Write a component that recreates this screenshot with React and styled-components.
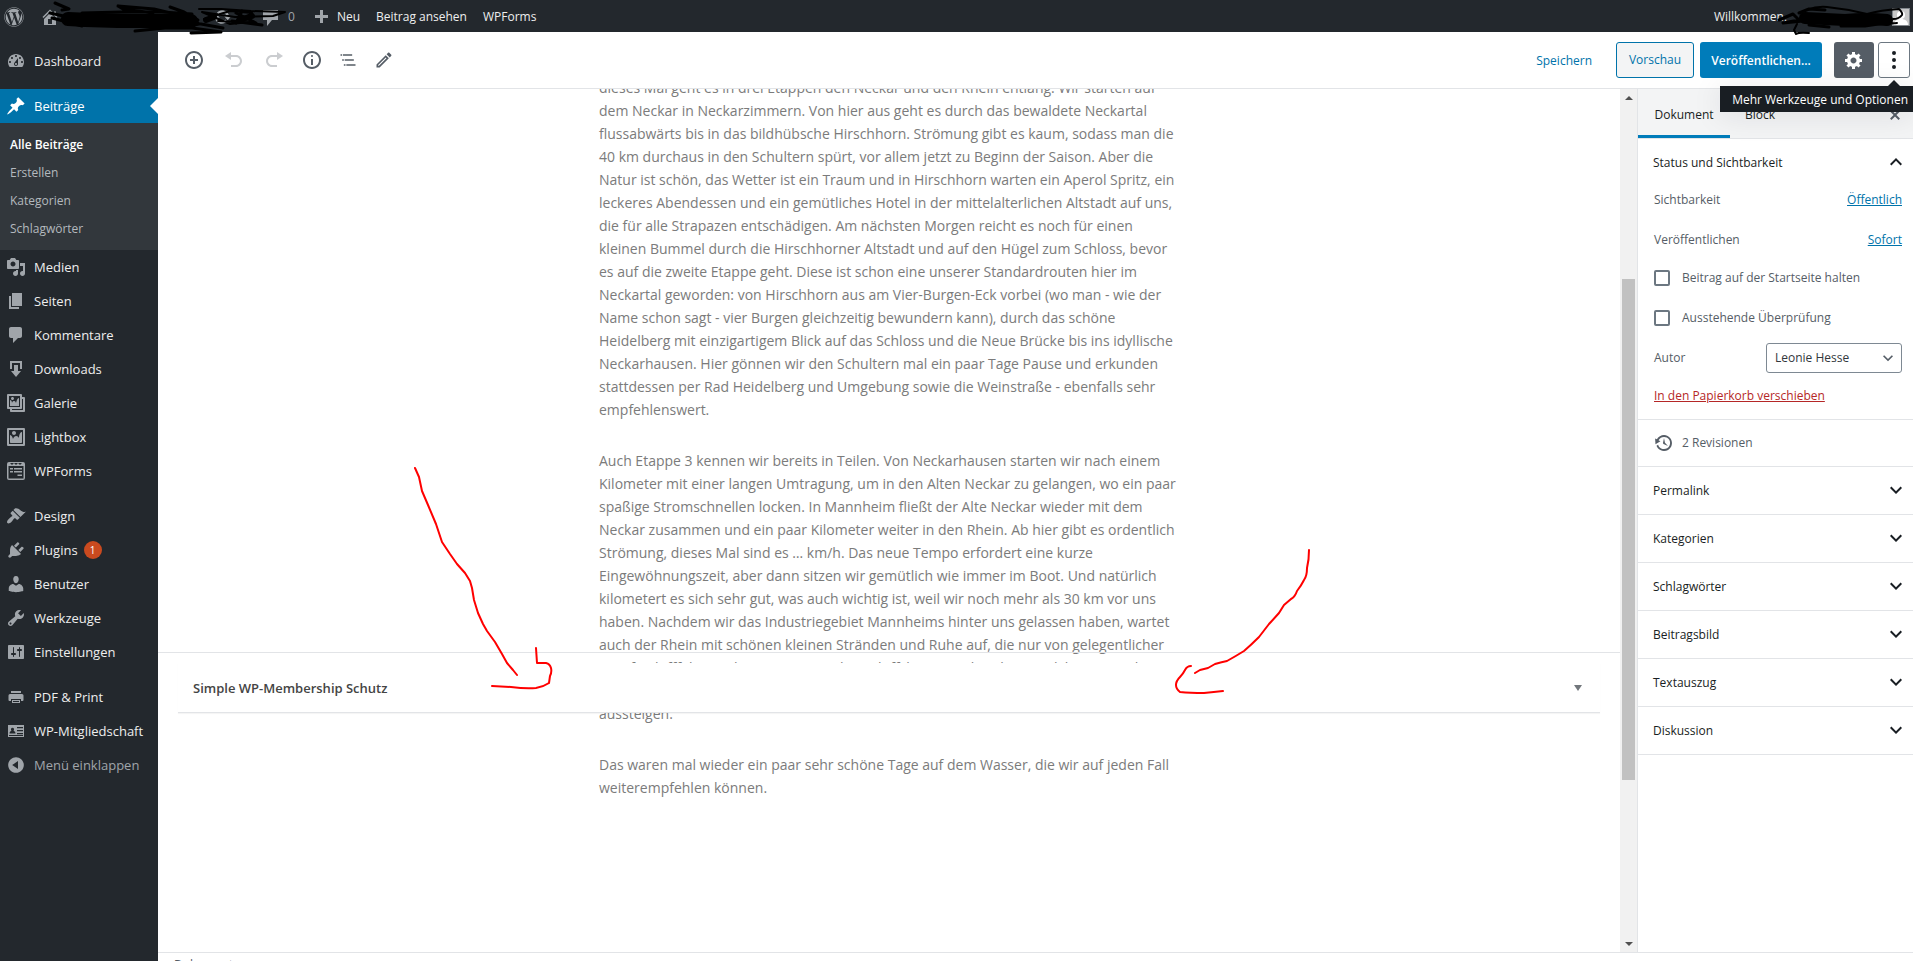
import React from "react";
import styled, { createGlobalStyle, css } from "styled-components";
import { FaWordpress } from "react-icons/fa";

const colors = {
  ADMIN_DARK: "#23282d",
  ADMIN_SUBMENU: "#32373c",
  ADMIN_ICON: "#a0a5aa",
  ADMIN_TEXT: "#eeeeee",
  BLUE: "#0073aa",
  BUTTON_BLUE: "#007cba",
  BORDER: "#e2e4e7",
  DARK: "#191e23",
  GREY: "#555d66",
  LIGHT: "#f3f4f5",
  RED: "#b52727",
};

const GlobalStyle = createGlobalStyle`
  * {
    box-sizing: border-box;
  }

  body {
    margin: 0;
    background: #fff;
    font-family: "Open Sans", "Noto Sans", sans-serif;
    font-size: 12px;
    line-height: 20px;
    color: ${colors.GREY};
  }

  button, select, input {
    font: inherit;
    margin: 0;
  }

  button {
    background: none;
    border: 0;
    padding: 0;
    color: inherit;
    cursor: pointer;
  }

  a {
    color: inherit;
    text-decoration: none;
  }

  ul {
    list-style: none;
    margin: 0;
    padding: 0;
  }
`;

const Page = styled.div`
  position: relative;
  display: flex;
  flex-direction: column;
  height: 100vh;
  overflow: hidden;
`;

const AdminBar = styled.header`
  display: flex;
  align-items: center;
  justify-content: space-between;
  flex: none;
  height: 32px;
  padding: 1px 4px 0;
  background: ${colors.ADMIN_DARK};
  color: ${colors.ADMIN_TEXT};
`;

const AdminBarGroup = styled.nav`
  display: flex;
  align-items: center;

  a {
    display: flex;
    align-items: center;
    gap: 6px;
    margin-right: 16px;
  }

  svg {
    fill: ${colors.ADMIN_ICON};
    color: ${colors.ADMIN_ICON};
  }

  .home {
    margin: 0 152px 0 0;
  }

  .updates {
    margin-right: 28px;
  }

  .comments {
    gap: 8px;
    color: ${colors.ADMIN_ICON};
  }
`;

const Account = styled.a`
  display: flex;
  align-items: center;
  gap: 105px;
`;

const Avatar = styled.svg`
  width: 18px;
  height: 18px;
  border: 1px solid #82878c;
  background: #c8c8c8;
  margin-right: -1px;
`;

const Body = styled.div`
  display: flex;
  flex: 1;
  min-height: 0;
`;

const SideMenu = styled.nav`
  flex: none;
  width: 158px;
  padding-top: 12px;
  background: ${colors.ADMIN_DARK};
  color: ${colors.ADMIN_TEXT};
  font-size: 13px;
`;

const MenuGroup = styled.ul`
  margin-bottom: 11px;
`;

const MenuLink = styled.a`
  position: relative;
  display: flex;
  align-items: center;
  gap: 8px;
  height: 34px;
  padding-left: 6px;
  white-space: nowrap;

  svg {
    flex: none;
    fill: ${colors.ADMIN_ICON};
  }

  ${({ $active }) =>
    $active &&
    css`
      background: ${colors.BLUE};
      color: #fff;

      svg {
        fill: #fff;
      }

      &::after {
        content: "";
        position: absolute;
        right: 0;
        border: 8px solid transparent;
        border-right-color: #fff;
      }
    `}
`;

const CollapseButton = styled.button`
  display: flex;
  align-items: center;
  gap: 8px;
  height: 34px;
  padding-left: 6px;
  color: ${colors.ADMIN_ICON};

  svg {
    fill: ${colors.ADMIN_ICON};
  }
`;

const SubMenu = styled.ul`
  padding: 8px 0 7px;
  background: ${colors.ADMIN_SUBMENU};
`;

const SubMenuLink = styled.a`
  display: block;
  padding: 4px 10px;
  font-size: 12px;
  font-weight: ${({ $current }) => ($current ? 600 : 400)};
  color: ${({ $current }) => ($current ? "#fff" : "#b4b9be")};
`;

const Badge = styled.span`
  width: 18px;
  height: 18px;
  border-radius: 9px;
  margin-left: -2px;
  background: #ca4a1f;
  color: #fff;
  font-size: 10px;
  line-height: 18px;
  text-align: center;
`;

const Editor = styled.div`
  display: flex;
  flex-direction: column;
  flex: 1;
  min-width: 0;
`;

const Toolbar = styled.div`
  display: flex;
  align-items: center;
  justify-content: space-between;
  flex: none;
  height: 57px;
  padding: 0 3px 0 22px;
  border-bottom: 1px solid ${colors.BORDER};
`;

const ToolGroup = styled.div`
  display: flex;
  align-items: center;
  gap: 12px;
`;

const ToolButton = styled.button`
  display: flex;
  align-items: center;
  justify-content: center;
  width: ${({ $wide }) => ($wide ? 28 : 24)}px;
  height: 36px;

  svg {
    fill: ${colors.GREY};
  }

  &:disabled {
    opacity: 0.3;
  }
`;

const ActionGroup = styled.div`
  display: flex;
  align-items: center;
`;

const ActionButton = styled.button`
  position: relative;
  display: flex;
  align-items: center;
  justify-content: center;
  height: 36px;
  border-radius: 3px;
  color: ${colors.BLUE};

  ${({ $kind }) =>
    $kind === "save" &&
    css`
      padding: 2px 24px 0;
    `}

  ${({ $kind }) =>
    $kind === "preview" &&
    css`
      width: 78px;
      border: 1px solid ${colors.BLUE};
      background: ${colors.LIGHT};
    `}

  ${({ $kind }) =>
    $kind === "publish" &&
    css`
      width: 122px;
      padding-top: 2px;
      margin: 0 12px 0 6px;
      background: ${colors.BUTTON_BLUE};
      color: #fff;
      font-weight: 600;
    `}

  ${({ $kind }) =>
    $kind === "settings" &&
    css`
      width: 40px;
      margin-right: 4px;
      background: ${colors.GREY};
      fill: #fff;
    `}

  ${({ $kind }) =>
    $kind === "more" &&
    css`
      width: 32px;
      border: 1px solid #6c7781;
      fill: ${colors.DARK};
    `}
`;

const Tooltip = styled.span`
  position: absolute;
  z-index: 5;
  top: 43px;
  right: -4px;
  padding: 4px 5px 2px 12px;
  background: ${colors.DARK};
  color: #fff;
  font-weight: 500;
  white-space: nowrap;
  box-shadow: 0 3px 30px rgba(25, 30, 35, 0.1);

  &::before {
    content: "";
    position: absolute;
    top: -6px;
    right: 13px;
    border: 6px solid transparent;
    border-top: 0;
    border-bottom-color: ${colors.DARK};
  }
`;

const Workspace = styled.div`
  display: flex;
  flex: 1;
  min-height: 0;
  border-bottom: 1px solid ${colors.BORDER};
`;

const Content = styled.main`
  display: flex;
  flex-direction: column;
  flex: 1;
  min-width: 0;
  overflow: hidden;
`;

const PostArea = styled.article`
  flex: 1;
  min-height: 0;
  width: 580px;
  margin: 0 auto;
  color: #7b7b7b;
  font-size: 14px;
  line-height: 23px;

  p {
    margin: -13px 0 41px;
  }
`;

const MetaArea = styled.section`
  flex: none;
  height: 300px;
  padding: 10px 20px;
  border-top: 1px solid ${colors.BORDER};
`;

const MetaBox = styled.button`
  position: relative;
  display: flex;
  align-items: center;
  justify-content: space-between;
  width: 100%;
  height: 50px;
  padding: 0 18px 0 15px;
  background: #fff;
  border-bottom: 1px solid ${colors.BORDER};
  box-shadow: 0 1px 1px rgba(0, 0, 0, 0.04);
  color: #444;
  font-size: 13px;
  font-weight: 600;
`;

const ScrollBar = styled.div`
  display: flex;
  flex-direction: column;
  flex: none;
  width: 17px;
  padding: 0 2px;
  background: #f1f1f1;
`;

const ScrollArrow = styled.button`
  height: 17px;
  fill: #505050;
  display: flex;
  align-items: center;
  justify-content: center;
`;

const ScrollRail = styled.div`
  display: grid;
  flex: 1;
  grid-template-rows: 173fr 501fr 155fr;
`;

const ScrollThumb = styled.div`
  grid-row: 2;
  background: #c1c1c1;
`;

const Settings = styled.aside`
  flex: none;
  width: 276px;
  border-left: 1px solid ${colors.BORDER};
`;

const Tabs = styled.div`
  display: flex;
  align-items: stretch;
  height: 50px;
  background: ${colors.LIGHT};
  border-bottom: 1px solid ${colors.BORDER};
`;

const Tab = styled.button`
  padding: 6px 15px 0;
  color: ${colors.DARK};
  border-bottom: 3px solid
    ${({ $active }) => ($active ? colors.BUTTON_BLUE : "transparent")};
  width: ${({ $active }) => ($active ? "92px" : "auto")};
`;

const CloseButton = styled.button`
  margin-left: auto;
  width: 36px;
  padding: 8px 0 0;
  fill: ${colors.GREY};
`;

const Panel = styled.section`
  border-bottom: 1px solid ${colors.BORDER};
`;

const PanelTitle = styled.button`
  display: flex;
  align-items: center;
  justify-content: space-between;
  width: 100%;
  height: 47px;
  padding: 0 5px 0 15px;
  color: ${colors.DARK};
  font-weight: 500;

  svg {
    fill: ${colors.DARK};
    margin-bottom: 2px;
  }
`;

const PanelBody = styled.div`
  padding: 4px 11px 13px 16px;
`;

const PanelRow = styled.div`
  display: flex;
  align-items: center;
  justify-content: space-between;
  height: 20px;
  margin-bottom: ${({ $gap }) => $gap || 20}px;
`;

const TextLink = styled.a`
  color: ${({ $danger }) => ($danger ? colors.RED : colors.BLUE)};
  text-decoration: underline;
`;

const CheckLabel = styled.label`
  display: flex;
  align-items: center;
  gap: 12px;
`;

const CheckBox = styled.input`
  appearance: none;
  width: 16px;
  height: 16px;
  border: 2px solid #6c7781;
  border-radius: 2px;
  background: #fff;
`;

const SelectWrap = styled.span`
  display: grid;
  align-items: center;
  justify-items: end;

  > * {
    grid-area: 1 / 1;
  }

  svg {
    margin-right: 4px;
    pointer-events: none;
    fill: ${colors.GREY};
  }
`;

const Select = styled.select`
  appearance: none;
  width: 136px;
  height: 30px;
  padding: 0 24px 0 8px;
  border: 1px solid #7e8993;
  border-radius: 3px;
  background: #fff;
  color: #32373c;
`;

const Revisions = styled.a`
  display: flex;
  align-items: center;
  gap: 8px;
  height: 46px;
  padding-left: 16px;
  font-weight: 500;

  svg {
    fill: ${colors.GREY};
  }
`;

const Breadcrumb = styled.footer`
  flex: none;
  height: 8px;
  padding: 2px 16px 0;
  overflow: hidden;
`;

const Drawing = styled.svg`
  position: absolute;
  z-index: 10;
  top: 0;
  ${({ $side }) => ($side === "right" ? "right: 0;" : "left: 0;")}
  pointer-events: none;
  fill: none;
  stroke: ${({ $ink }) => $ink};
  stroke-linecap: round;
  stroke-linejoin: round;
`;

const icons = {
  home: "M16 8.5l1.53 1.53-1.06 1.06L10 4.6l-6.47 6.49-1.06-1.06L10 2.5l4 4v-2h2v4zm-6-2.46l6 5.99V18H4v-5.97zM12 17v-5H8v5h4z",
  update:
    "M10.2 3.28c3.53 0 6.43 2.61 6.92 6h2.08l-3.5 4-3.5-4h2.32c-.45-1.97-2.21-3.45-4.32-3.45-1.45 0-2.73.71-3.54 1.78L4.95 5.66C6.23 4.2 8.11 3.28 10.2 3.28zm-.4 13.44c-3.52 0-6.43-2.61-6.92-6H.8l3.5-4c1.17 1.33 2.33 2.67 3.5 4H5.48c.45 1.97 2.21 3.45 4.32 3.45 1.45 0 2.73-.71 3.54-1.78l1.71 1.95c-1.28 1.46-3.15 2.38-5.25 2.38z",
  barComment: "M3 3h15v10h-6l-5 6v-6H3z",
  plus: "M17 8v3h-5v5H9v-5H4V8h5V3h3v5h5z",
  dashboard:
    "M3.76 16h12.48c1.1-1.37 1.76-3.11 1.76-5 0-4.42-3.58-8-8-8s-8 3.58-8 8c0 1.89.66 3.63 1.76 5zM10 4c.55 0 1 .45 1 1s-.45 1-1 1-1-.45-1-1 .45-1 1-1zM6 6c.55 0 1 .45 1 1s-.45 1-1 1-1-.45-1-1 .45-1 1-1zm8 0c.55 0 1 .45 1 1s-.45 1-1 1-1-.45-1-1 .45-1 1-1zm-5.37 5.55L12 7v6c0 1.1-.9 2-2 2s-2-.9-2-2c0-.57.24-1.08.63-1.45zM4 10c.55 0 1 .45 1 1s-.45 1-1 1-1-.45-1-1 .45-1 1-1zm12 0c.55 0 1 .45 1 1s-.45 1-1 1-1-.45-1-1 .45-1 1-1zm-5 3c0-.55-.45-1-1-1s-1 .45-1 1 .45 1 1 1 1-.45 1-1z",
  pin: "M10.44 3.02l1.82-1.82 6.36 6.35-1.83 1.82c-1.05-.68-2.48-.57-3.41.36l-.75.75c-.92.93-1.04 2.35-.35 3.41l-1.83 1.82-2.41-2.41-2.8 2.79c-.42.42-3.38 2.71-3.8 2.29s1.86-3.39 2.28-3.81l2.79-2.79L4.1 9.36l1.83-1.82c1.05.69 2.48.57 3.4-.36l.75-.75c.93-.92 1.05-2.35.36-3.41z",
  media:
    "M13 11V4c0-.55-.45-1-1-1h-1.67L9 1H5L3.67 3H2c-.55 0-1 .45-1 1v7c0 .55.45 1 1 1h10c.55 0 1-.45 1-1zM7 4.5c1.38 0 2.5 1.12 2.5 2.5S8.38 9.5 7 9.5 4.5 8.38 4.5 7 5.62 4.5 7 4.5zM14 6h5v10.5c0 1.38-1.12 2.5-2.5 2.5S14 17.88 14 16.5s1.12-2.5 2.5-2.5c.17 0 .34.02.5.05V9h-3V6zm-4 8.05V13h2v3.5c0 1.38-1.12 2.5-2.5 2.5S7 17.88 7 16.5 8.12 14 9.5 14c.17 0 .34.02.5.05z",
  page: "M6 15V2h10v13H6zm-1 1h8v2H3V5h2v11z",
  comment:
    "M5 2h9c1.1 0 2 .9 2 2v7c0 1.1-.9 2-2 2h-2l-5 5v-5H5c-1.1 0-2-.9-2-2V4c0-1.1.9-2 2-2z",
  download: "M14.01 4v6h2V2H4v8h2.01V4h8zm-2 2v6h3l-5 6-5-6h3V6h4z",
  gallery:
    "M16 4h1.96c.57 0 1.04.47 1.04 1.04v12.92c0 .57-.47 1.04-1.04 1.04H5.04C4.47 19 4 18.53 4 17.96V16H2.04C1.47 16 1 15.53 1 14.96V2.04C1 1.47 1.47 1 2.04 1h12.92c.57 0 1.04.47 1.04 1.04V4zM3 14h11V3H3v11zm5-8.5C8 4.67 7.33 4 6.5 4S5 4.67 5 5.5 5.67 7 6.5 7 8 6.33 8 5.5zm2 4.5s1-5 3-5v8H4V7c2 0 2 3 2 3s.33-2 2-2 2 2 2 2zm7 7V6h-1v8.96c0 .57-.47 1.04-1.04 1.04H6v1h11z",
  image:
    "M2.25 1h15.5c.69 0 1.25.56 1.25 1.25v15.5c0 .69-.56 1.25-1.25 1.25H2.25C1.56 19 1 18.44 1 17.75V2.25C1 1.56 1.56 1 2.25 1zM17 17V3H3v14h14zM10 6c0-1.1-.9-2-2-2s-2 .9-2 2 .9 2 2 2 2-.9 2-2zm3 5s0-6 3-6v10c0 .55-.45 1-1 1H5c-.55 0-1-.45-1-1V8c2 0 3 4 3 4s1-3 3-3 3 2 3 2z",
  forms:
    "M3 1h14a2 2 0 012 2v14a2 2 0 01-2 2H3a2 2 0 01-2-2V3a2 2 0 012-2zm-.5 4v12.500h15V5zM4 2l2 2 2-2zm4 0l2 2 2-2zm4 0l2 2 2-2zM4 7h3v1.500H4zm4 0h8v1.500H8zM4 10h3v1.500H4zm4 0h8v1.500H8zM11.500 13.500H16V15h-4.500z",
  appearance:
    "M14.48 11.06L7.41 3.99l1.5-1.5c.5-.56 2.3-.47 3.51.32 1.21.8 1.43 1.28 2.91 2.1 1.18.64 2.45 1.26 4.45.85zm-.71.71L6.7 4.7 4.93 6.47c-.39.39-.39 1.02 0 1.41l1.06 1.06c.39.39.39 1.03 0 1.42-.6.6-1.43 1.11-2.21 1.69-.35.26-.7.53-1.01.84C1.43 14.23.4 16.08 1.4 17.07c.99 1 2.84-.03 4.18-1.36.31-.31.58-.66.85-1.02.57-.78 1.08-1.61 1.69-2.21.39-.39 1.02-.39 1.41 0l1.06 1.06c.39.39 1.02.39 1.41 0z",
  plugins:
    "M13.11 4.36L9.87 7.6 8 5.73l3.24-3.24c.35-.34 1.05-.2 1.56.32.52.51.66 1.21.31 1.55zm-8 1.77l.91-1.12 9.01 9.01-1.19.84c-.71.71-2.63 1.16-3.82 1.16H6.14L4.9 17.26c-.59.59-1.54.59-2.12 0-.59-.58-.59-1.53 0-2.12l1.24-1.24v-3.88c0-1.13.4-3.19 1.09-3.89zm7.26 3.97l3.24-3.24c.34-.35 1.04-.21 1.55.31.52.51.66 1.21.31 1.55l-3.24 3.25z",
  users:
    "M10 9.25c-2.27 0-2.73-3.44-2.73-3.44C7 4.02 7.82 2 9.97 2c2.16 0 2.98 2.02 2.71 3.81 0 0-.41 3.44-2.68 3.44zm0 2.57L12.72 10c2.39 0 4.52 2.33 4.52 4.53v2.49s-3.65 1.13-7.24 1.13c-3.65 0-7.24-1.13-7.24-1.13v-2.49c0-2.25 1.94-4.48 4.47-4.48z",
  tools:
    "M16.68 9.77c-1.34 1.34-3.3 1.67-4.95.99l-5.41 6.52c-.99.99-2.59.99-3.58 0s-.99-2.59 0-3.57l6.52-5.42c-.68-1.65-.35-3.61.99-4.95 1.28-1.28 3.12-1.62 4.72-1.06l-2.89 2.89 2.82 2.82 2.86-2.87c.53 1.58.18 3.39-1.08 4.65zM3.81 16.21c.4.39 1.04.39 1.43 0 .4-.4.4-1.04 0-1.43-.39-.4-1.03-.4-1.43 0-.39.39-.39 1.03 0 1.43z",
  settings:
    "M18 16V4c0-.55-.45-1-1-1H3c-.55 0-1 .45-1 1v12c0 .55.45 1 1 1h14c.55 0 1-.45 1-1zM8 11h1c.55 0 1 .45 1 1s-.45 1-1 1H8v1.5c0 .28-.22.5-.5.5s-.5-.22-.5-.5V13H6c-.55 0-1-.45-1-1s.45-1 1-1h1V5.5c0-.28.22-.5.5-.5s.5.22.5.5V11zm5-2h-1c-.55 0-1-.45-1-1s.45-1 1-1h1V5.5c0-.28.22-.5.5-.5s.5.22.5.5V7h1c.55 0 1 .45 1 1s-.45 1-1 1h-1v5.5c0 .28-.22.5-.5.5s-.5-.22-.5-.5V9z",
  print:
    "M5 4h10v2H5zM4 7h12a1.500 1.500 0 011.500 1.500V13a1 1 0 01-1 1H15v-2H5v2H3.500a1 1 0 01-1-1V8.500A1.500 1.500 0 014 7zm2 6h8v3H6zm1 1v1h6v-1z",
  idAlt:
    "M2 4h16v12H2zm1.500 8.500h6c0-2-1.500-2.500-2-2.700 1-.8.700-3-1-3s-2 2.200-1 3c-.5.200-2 .700-2 2.700zM11 6v1.200h6V6zm0 3v1.200h6V9zm0 3v1.200h6V12zM3 14v1h14v-1z",
  collapse:
    "M10 2.160c4.330 0 7.840 3.510 7.840 7.840s-3.510 7.840-7.840 7.840S2.160 14.330 2.160 10 5.710 2.160 10 2.160zm2 11.720V6.120L6.180 9.970z",
  insert:
    "M10 1c-5 0-9 4-9 9s4 9 9 9 9-4 9-9-4-9-9-9zm0 16c-3.900 0-7-3.100-7-7s3.100-7 7-7 7 3.100 7 7-3.100 7-7 7zm1-11H9v3H6v2h3v3h2v-3h3V9h-3V6z",
  undo: "M12 5H7V2L1 6l6 4V7h5c2.200 0 4 1.800 4 4s-1.800 4-4 4H7v2h5c3.300 0 6-2.700 6-6s-2.700-6-6-6z",
  redo: "M8 5h5V2l6 4-6 4V7H8c-2.200 0-4 1.800-4 4s1.800 4 4 4h5v2H8c-3.300 0-6-2.700-6-6s2.700-6 6-6z",
  info: "M9 15h2V9H9v6zm1-10c-.5 0-1 .5-1 1s.5 1 1 1 1-.5 1-1-.5-1-1-1zm0-4c-5 0-9 4-9 9s4 9 9 9 9-4 9-9-4-9-9-9zm0 16c-3.900 0-7-3.100-7-7s3.100-7 7-7 7 3.100 7 7-3.100 7-7 7z",
  outline:
    "M5 5H3v2h2V5zm3 8h11v-2H8v2zm9-8H6v2h11V5zM7 11H5v2h2v-2zm0 8h2v-2H7v2zm3-2v2h11v-2H10z",
  pencil:
    "M3 17.250V21h3.750L17.810 9.940l-3.750-3.750L3 17.250zM5.920 19H5v-.920l9.060-9.060.920.920L5.920 19zM20.710 5.630l-2.340-2.340c-.200-.200-.450-.290-.710-.290s-.510.100-.700.290l-1.830 1.830 3.750 3.750 1.830-1.830c.390-.390.390-1.020 0-1.410z",
  gear: "M18 12h-2.180c-.170.700-.440 1.350-.810 1.930l1.540 1.540-2.100 2.100-1.540-1.540c-.580.360-1.230.630-1.910.790V19H8v-2.180c-.680-.160-1.330-.430-1.910-.790l-1.540 1.540-2.120-2.120 1.540-1.540c-.360-.580-.630-1.230-.790-1.910H1V9.030h2.170c.160-.700.440-1.350.800-1.940L2.430 5.550l2.100-2.100 1.540 1.540c.580-.370 1.240-.640 1.930-.810V2h3v2.180c.680.160 1.330.430 1.910.790l1.540-1.540 2.120 2.120-1.540 1.540c.360.590.640 1.240.800 1.940H18V12zm-8.500 1.500c1.660 0 3-1.340 3-3s-1.340-3-3-3-3 1.340-3 3 1.340 3 3 3z",
  more: "M10 1a2 2 0 110 4 2 2 0 010-4zm0 7a2 2 0 110 4 2 2 0 010-4zm0 7a2 2 0 110 4 2 2 0 010-4z",
  close:
    "M14.950 6.460L11.410 10l3.540 3.540-1.410 1.410L10 11.420l-3.530 3.530-1.420-1.420L8.580 10 5.050 6.470l1.420-1.420L10 8.580l3.540-3.530z",
  down: "M7.410 8.590L12 13.170l4.590-4.580L18 10l-6 6-6-6z",
  up: "M12 8l-6 6 1.410 1.410L12 10.830l4.590 4.580L18 14z",
  backup:
    "M13.650 2.880c3.930 2.010 5.480 6.840 3.470 10.770s-6.830 5.480-10.770 3.470c-1.870-.960-3.200-2.560-3.860-4.400l1.640-1.030c.450 1.570 1.520 2.950 3.080 3.760 3.010 1.540 6.690.350 8.230-2.660 1.550-3.010.360-6.690-2.650-8.240C9.780 3.010 6.100 4.200 4.560 7.210l1.880.970-4.950 3.080-.390-5.820 1.780.910C4.900 2.400 9.750.890 13.650 2.880zm-4.360 7.830C9.110 10.530 9 10.280 9 10c0-.070.030-.120.040-.190h-.010L10 5l.970 4.810L14 13l-4.500-2.120.020-.020c-.080-.040-.160-.090-.230-.150z",
};

const Icon = ({ name, size = 20, box = 20 }) => (
  <svg
    width={size}
    height={size}
    viewBox={`0 0 ${box} ${box}`}
    fillRule="evenodd"
    aria-hidden="true"
  >
    <path d={icons[name]} />
  </svg>
);

const menuGroups = [
  [{ label: "Dashboard", icon: "dashboard" }],
  [
    {
      label: "Beiträge",
      icon: "pin",
      active: true,
      children: ["Alle Beiträge", "Erstellen", "Kategorien", "Schlagwörter"],
    },
    { label: "Medien", icon: "media" },
    { label: "Seiten", icon: "page" },
    { label: "Kommentare", icon: "comment" },
    { label: "Downloads", icon: "download" },
    { label: "Galerie", icon: "gallery" },
    { label: "Lightbox", icon: "image" },
    { label: "WPForms", icon: "forms" },
  ],
  [
    { label: "Design", icon: "appearance" },
    { label: "Plugins", icon: "plugins", count: 1 },
    { label: "Benutzer", icon: "users" },
    { label: "Werkzeuge", icon: "tools" },
    { label: "Einstellungen", icon: "settings" },
  ],
  [
    { label: "PDF & Print", icon: "print" },
    { label: "WP-Mitgliedschaft", icon: "idAlt" },
  ],
];

const paragraphs = [
  "dieses Mal geht es in drei Etappen den Neckar und den Rhein entlang. Wir starten auf dem Neckar in Neckarzimmern. Von hier aus geht es durch das bewaldete Neckartal flussabwärts bis in das bildhübsche Hirschhorn. Strömung gibt es kaum, sodass man die 40 km durchaus in den Schultern spürt, vor allem jetzt zu Beginn der Saison. Aber die Natur ist schön, das Wetter ist ein Traum und in Hirschhorn warten ein Aperol Spritz, ein leckeres Abendessen und ein gemütliches Hotel in der mittelalterlichen Altstadt auf uns, die für alle Strapazen entschädigen. Am nächsten Morgen reicht es noch für einen kleinen Bummel durch die Hirschhorner Altstadt und auf den Hügel zum Schloss, bevor es auf die zweite Etappe geht. Diese ist schon eine unserer Standardrouten hier im Neckartal geworden: von Hirschhorn aus am Vier-Burgen-Eck vorbei (wo man - wie der Name schon sagt - vier Burgen gleichzeitig bewundern kann), durch das schöne Heidelberg mit einzigartigem Blick auf das Schloss und die Neue Brücke bis ins idyllische Neckarhausen. Hier gönnen wir den Schultern mal ein paar Tage Pause und erkunden stattdessen per Rad Heidelberg und Umgebung sowie die Weinstraße - ebenfalls sehr empfehlenswert.",
  "Auch Etappe 3 kennen wir bereits in Teilen. Von Neckarhausen starten wir nach einem Kilometer mit einer langen Umtragung, um in den Alten Neckar zu gelangen, wo ein paar spaßige Stromschnellen locken. In Mannheim fließt der Alte Neckar wieder mit dem Neckar zusammen und ein paar Kilometer weiter in den Rhein. Ab hier gibt es ordentlich Strömung, dieses Mal sind es … km/h. Das neue Tempo erfordert eine kurze Eingewöhnungszeit, aber dann sitzen wir gemütlich wie immer im Boot. Und natürlich kilometert es sich sehr gut, was auch wichtig ist, weil wir noch mehr als 30 km vor uns haben. Nachdem wir das Industriegebiet Mannheims hinter uns gelassen haben, wartet auch der Rhein mit schönen kleinen Stränden und Ruhe auf, die nur von gelegentlicher Berufsschifffahrt und ein paar rasenden Schiffchen unterbrochen wird, bevor wir dann in Speyer nach einem langen Tag auf dem Wasser zufrieden und etwas müde wieder aussteigen.",
  "Das waren mal wieder ein paar sehr schöne Tage auf dem Wasser, die wir auf jeden Fall weiterempfehlen können.",
];

const closedPanels = [
  "Permalink",
  "Kategorien",
  "Schlagwörter",
  "Beitragsbild",
  "Textauszug",
  "Diskussion",
];

const App = () => {
  return (
    <>
      <GlobalStyle />
      <Page>
        <AdminBar>
          <AdminBarGroup>
            <a href="#wordpress" aria-label="WordPress">
              <FaWordpress size={20} />
            </a>
            <a href="#site" className="home" aria-label="Website">
              <Icon name="home" />
            </a>
            <a href="#updates" className="updates" aria-label="Updates">
              <Icon name="update" />
            </a>
            <a href="#kommentare" className="comments">
              <Icon name="barComment" />
              <span>0</span>
            </a>
            <a href="#neu">
              <Icon name="plus" />
              <span>Neu</span>
            </a>
            <a href="#ansehen">Beitrag ansehen</a>
            <a href="#wpforms">WPForms</a>
          </AdminBarGroup>
          <Account href="#profil">
            <span>Willkommen,</span>
            <Avatar viewBox="0 0 16 16" fill="#fff">
              <circle cx="8" cy="6" r="4" />
              <path d="M1 16c0-4 3-6 7-6s7 2 7 6z" />
            </Avatar>
          </Account>
        </AdminBar>

        <Body>
          <SideMenu>
            {menuGroups.map((group, index) => (
              <MenuGroup key={index}>
                {group.map((item) => (
                  <li key={item.label}>
                    <MenuLink href="#menu" $active={item.active}>
                      <Icon name={item.icon} />
                      {item.label}
                      {item.count && <Badge>{item.count}</Badge>}
                    </MenuLink>
                    {item.children && (
                      <SubMenu>
                        {item.children.map((child, i) => (
                          <li key={child}>
                            <SubMenuLink href="#menu" $current={i === 0}>
                              {child}
                            </SubMenuLink>
                          </li>
                        ))}
                      </SubMenu>
                    )}
                  </li>
                ))}
                {index === menuGroups.length - 1 && (
                  <li>
                    <CollapseButton>
                      <Icon name="collapse" />
                      Menü einklappen
                    </CollapseButton>
                  </li>
                )}
              </MenuGroup>
            ))}
          </SideMenu>

          <Editor>
            <Toolbar>
              <ToolGroup>
                <ToolButton $wide aria-label="Block hinzufügen">
                  <Icon name="insert" />
                </ToolButton>
                <ToolButton $wide aria-label="Rückgängig" disabled>
                  <Icon name="undo" />
                </ToolButton>
                <ToolButton $wide aria-label="Wiederholen" disabled>
                  <Icon name="redo" />
                </ToolButton>
                <ToolButton aria-label="Inhaltsstruktur">
                  <Icon name="info" />
                </ToolButton>
                <ToolButton aria-label="Block-Navigation">
                  <Icon name="outline" box={24} />
                </ToolButton>
                <ToolButton aria-label="Bearbeiten">
                  <Icon name="pencil" box={24} />
                </ToolButton>
              </ToolGroup>
              <ActionGroup>
                <ActionButton $kind="save">Speichern</ActionButton>
                <ActionButton $kind="preview">Vorschau</ActionButton>
                <ActionButton $kind="publish">Veröffentlichen…</ActionButton>
                <ActionButton $kind="settings" aria-label="Einstellungen">
                  <Icon name="gear" />
                </ActionButton>
                <ActionButton $kind="more" aria-label="Mehr">
                  <Icon name="more" />
                  <Tooltip>Mehr Werkzeuge und Optionen</Tooltip>
                </ActionButton>
              </ActionGroup>
            </Toolbar>

            <Workspace>
              <Content>
                <PostArea>
                  {paragraphs.map((text) => (
                    <p key={text}>{text}</p>
                  ))}
                </PostArea>
                <MetaArea>
                  <MetaBox>
                    Simple WP-Membership Schutz
                    <svg width="8" height="6" fill="#72777c">
                      <path d="M0 0h8L4 6z" />
                    </svg>
                  </MetaBox>
                </MetaArea>
              </Content>

              <ScrollBar>
                <ScrollArrow aria-label="Nach oben">
                  <svg width="8" height="4">
                    <path d="M0 4h8L4 0z" />
                  </svg>
                </ScrollArrow>
                <ScrollRail>
                  <ScrollThumb />
                </ScrollRail>
                <ScrollArrow aria-label="Nach unten">
                  <svg width="8" height="4">
                    <path d="M0 0h8L4 4z" />
                  </svg>
                </ScrollArrow>
              </ScrollBar>

              <Settings>
                <Tabs>
                  <Tab $active>Dokument</Tab>
                  <Tab>Block</Tab>
                  <CloseButton aria-label="Schließen">
                    <Icon name="close" />
                  </CloseButton>
                </Tabs>
                <Panel>
                  <PanelTitle>
                    Status und Sichtbarkeit
                    <Icon name="up" size={24} box={24} />
                  </PanelTitle>
                  <PanelBody>
                    <PanelRow>
                      <span>Sichtbarkeit</span>
                      <TextLink href="#sichtbarkeit">Öffentlich</TextLink>
                    </PanelRow>
                    <PanelRow $gap={18}>
                      <span>Veröffentlichen</span>
                      <TextLink href="#zeitpunkt">Sofort</TextLink>
                    </PanelRow>
                    <PanelRow>
                      <CheckLabel>
                        <CheckBox type="checkbox" />
                        Beitrag auf der Startseite halten
                      </CheckLabel>
                    </PanelRow>
                    <PanelRow>
                      <CheckLabel>
                        <CheckBox type="checkbox" />
                        Ausstehende Überprüfung
                      </CheckLabel>
                    </PanelRow>
                    <PanelRow $gap={18}>
                      <label htmlFor="autor">Autor</label>
                      <SelectWrap>
                        <Select id="autor">
                          <option>Leonie Hesse</option>
                        </Select>
                        <Icon name="down" size={20} box={24} />
                      </SelectWrap>
                    </PanelRow>
                    <TextLink href="#papierkorb" $danger>
                      In den Papierkorb verschieben
                    </TextLink>
                  </PanelBody>
                </Panel>
                <Panel>
                  <Revisions href="#revisionen">
                    <Icon name="backup" />2 Revisionen
                  </Revisions>
                </Panel>
                {closedPanels.map((title) => (
                  <Panel key={title}>
                    <PanelTitle>
                      {title}
                      <Icon name="down" size={24} box={24} />
                    </PanelTitle>
                  </Panel>
                ))}
              </Settings>
            </Workspace>
            <Breadcrumb>Dokument</Breadcrumb>
          </Editor>
        </Body>

        {/* hand-drawn arrows */}
        <Drawing width="1320" height="720" $ink="#ff0000" strokeWidth="2">
          <path d="M415 468l4 9 3 14 6 14 8 19 6 18 8 12 7 10 8 9 5 8 2 7 2 12 4 13 5 11 4 7 8 11 7 12 5 9 6 7 4 5" />
          <path d="M536 648l1 15 9 0q4 1 5 5 1 4-1 8l-1 7q-6 4-13 5-10 1-25-1l-19-1" />
          <path d="M1309 550q0 10-2 18 0 8-3 12-3 6-7 11-2 6-6 8l-7 6-5 8-10 11-10 13q-8 8-15 14-8 5-17 10-5 1-12 3l-7 4-8 2-5 3" />
          <path d="M1191 666q-4 0-6 4-2 4-5 7-4 4-4 8 0 4 4 7 10 1 24 1 10-1 19-2" />
        </Drawing>
        {/* blacked-out site name */}
        <Drawing width="320" height="40" $ink="#000" strokeWidth="2">
          <path
            strokeWidth="14"
            d="M68 19q35 2 65 2 30 0 58 0"
          />
          <path
            strokeWidth="3"
            d="M55 3l14 6-7 1M50 13l18 4M52 18l30 8M82 13l40-1 40 0 30 2M118 6l36 3 25 6M118 6l5 3 30 4M170 7l14 5 14 8M180 11l14 8 5 5-14 3 36 5-30 1M135 31l30-3 25 0M190 22l33 6"
          />
          <path d="M199 9l22 0 30 2 34 1-12 4-38 1-33-5 28 12 20-2M204 19l26-8 22 2-14 9-20-1" />
          <path strokeWidth="6" d="M206 20l8-3M240 20l12-4" />
          <path strokeWidth="3" d="M236 13l20 10M232 21l30 4M242 11l-6 12" />
        </Drawing>
        {/* blacked-out user name */}
        <Drawing
          width="150"
          height="40"
          $side="right"
          $ink="#000"
          strokeWidth="2"
        >
          <path strokeWidth="12" d="M42 18q20 1 40 2 22-2 42 0" />
          <path
            strokeWidth="3"
            d="M16 20l14-6 6 6-16 3 20-2M36 13l10-4 16 1M46 25l20 2M78 26l24 0 20-3"
          />
          <path d="M44 10q10-4 20-3 20 2 40 7 14-4 32-5 4 4 3 6-3 4-9 4M34 24l-3 6 2 4q3-2 13-1" />
          <path d="M122 22q6 2 12 1" />
        </Drawing>
      </Page>
    </>
  );
};

export default App;
